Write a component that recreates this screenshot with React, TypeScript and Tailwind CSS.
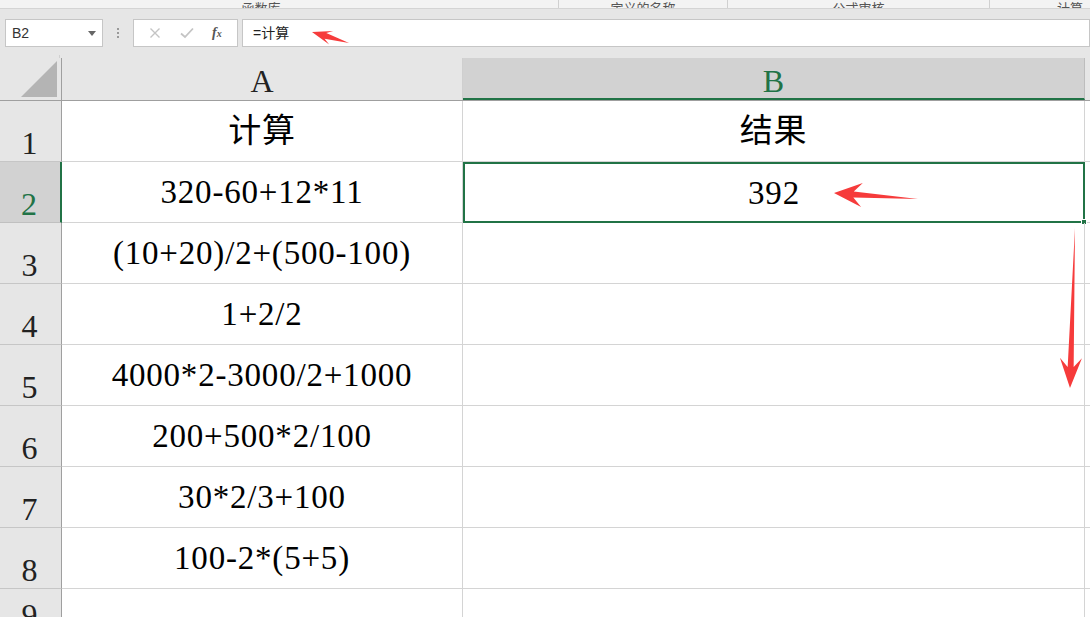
import React from "react";

const rows: { a: string; b: string }[] = [
  { a: "计算", b: "结果" },
  { a: "320-60+12*11", b: "392" },
  { a: "(10+20)/2+(500-100)", b: "" },
  { a: "1+2/2", b: "" },
  { a: "4000*2-3000/2+1000", b: "" },
  { a: "200+500*2/100", b: "" },
  { a: "30*2/3+100", b: "" },
  { a: "100-2*(5+5)", b: "" },
  { a: "", b: "" },
];

const serif = "font-['Liberation_Serif','Noto_Sans_CJK_SC',serif]";

function Arrow({ x1, y1, x2, y2, head = 26, width = 22 }: { x1: number; y1: number; x2: number; y2: number; head?: number; width?: number }) {
  // tapered arrow from tail (x1,y1) to tip (x2,y2)
  const dx = x2 - x1;
  const dy = y2 - y1;
  const len = Math.hypot(dx, dy);
  const ux = dx / len;
  const uy = dy / len;
  const px = -uy;
  const py = ux;
  const bx = x2 - ux * head;
  const by = y2 - uy * head;
  const nx = x2 - ux * (head * 0.7);
  const ny = y2 - uy * (head * 0.7);
  const pts = [
    [x1, y1],
    [nx + px * 3, ny + py * 3],
    [bx + px * (width / 2), by + py * (width / 2)],
    [x2, y2],
    [bx - px * (width / 2), by - py * (width / 2)],
    [nx - px * 3, ny - py * 3],
  ]
    .map((p) => p.join(","))
    .join(" ");
  return <polygon points={pts} fill="#f63b3b" />;
}

export default function App() {
  return (
    <div className="relative w-[1090px] h-[617px] overflow-hidden bg-white font-['Liberation_Sans','Noto_Sans_CJK_SC',sans-serif]">
      {/* ribbon group labels, cut off at the top of the shot */}
      <div className="flex h-[9px] overflow-hidden bg-[#f3f3f3] border-b border-[#d4d4d4] text-[13px] text-[#555] leading-none">
        <div className="w-[559px] border-r border-[#d0d0d0] flex items-end justify-center pr-[36px]">
          <span className="mb-[-7px]">函数库</span>
        </div>
        <div className="w-[169px] border-r border-[#d0d0d0] flex items-end justify-center">
          <span className="mb-[-7px]">定义的名称</span>
        </div>
        <div className="w-[262px] border-r border-[#d0d0d0] flex items-end justify-center">
          <span className="mb-[-7px]">公式审核</span>
        </div>
        <div className="flex-1 flex items-end justify-center pl-[60px]">
          <span className="mb-[-7px]">计算</span>
        </div>
      </div>

      {/* formula bar */}
      <div className="flex items-center h-[46px] bg-[#e6e6e6] pt-[2px]">
        <div className="ml-[5px] w-[98px] h-[28px] bg-white border border-[#c6c6c6] flex items-center justify-between px-[6px] text-[14px] text-[#333]">
          <span>B2</span>
          <span className="w-0 h-0 border-l-[4px] border-r-[4px] border-t-[5px] border-l-transparent border-r-transparent border-t-[#666]" />
        </div>
        <div className="w-[30px] flex flex-col items-center justify-center gap-[2px]">
          <span className="w-[2px] h-[2px] bg-[#999]" />
          <span className="w-[2px] h-[2px] bg-[#999]" />
          <span className="w-[2px] h-[2px] bg-[#999]" />
        </div>
        <div className="w-[105px] h-[28px] bg-white border border-[#c6c6c6] flex items-center justify-around px-[6px]">
          <svg width="12" height="12" viewBox="0 0 12 12">
            <path d="M1.5 1.5 L10.5 10.5 M10.5 1.5 L1.5 10.5" stroke="#c4c4c4" strokeWidth="1.4" />
          </svg>
          <svg width="14" height="12" viewBox="0 0 14 12">
            <path d="M1 6.5 L5 10 L13 1.5" stroke="#c4c4c4" strokeWidth="1.8" fill="none" />
          </svg>
          <span className="text-[14px] italic font-['Liberation_Serif',serif] text-[#555] font-bold leading-none">
            f<span className="text-[10px]">x</span>
          </span>
        </div>
        <div className="ml-[4px] flex-1 h-[28px] bg-white border border-[#c6c6c6] flex items-center pl-[10px] text-[14px] text-[#222]">
          =计算
        </div>
      </div>

      {/* gap strip */}
      <div className="h-[3px] bg-[#e6e6e6] flex">
        <div className="w-[59px]" />
        <div className="w-[1px] bg-[#d0d0d0]" />
      </div>

      {/* column headers */}
      <div className={`flex h-[43px] bg-[#e6e6e6] border-b border-[#9f9f9f] ${serif}`}>
        <div className="w-[62px] border-r border-[#9f9f9f] flex items-end justify-end pr-[4px] pb-[3px]">
          <svg width="36" height="36" viewBox="0 0 36 36">
            <polygon points="36,0 36,36 0,36" fill="#b4b4b4" />
          </svg>
        </div>
        <div className="w-[401px] border-r border-[#cfcfcf] flex items-center justify-center text-[32px] text-[#222] pt-[4px]">A</div>
        <div className="w-[622px] bg-[#d2d2d2] border-r border-[#bdbdbd] border-b-2 border-b-[#217346] flex items-center justify-center text-[32px] text-[#217346] pt-[6px]">
          B
        </div>
        <div className="flex-1 bg-[#e6e6e6]" />
      </div>

      {/* rows */}
      {rows.map((r, i) => {
        const sel = i === 1;
        const last = i === rows.length - 1;
        return (
          <div key={i} className={`flex h-[61px] ${serif}`}>
            <div
              className={`w-[62px] shrink-0 flex justify-center pr-[2px] text-[32px] leading-none border-b ${
                last ? "items-start pt-[10px]" : "items-end pb-[2px]"
              } ${
                sel
                  ? "bg-[#d2d2d2] text-[#217346] border-r-2 border-r-[#217346] border-b-[#c0c0c0]"
                  : "bg-[#e6e6e6] text-[#222] border-r border-r-[#9f9f9f] border-b-[#c6c6c6]"
              }`}
            >
              {i + 1}
            </div>
            <div className="w-[401px] shrink-0 border-r border-b border-[#d4d4d4] flex items-center justify-center text-[33px] tracking-[0.8px] text-black pt-[2px]">
              {r.a}
            </div>
            <div
              className={`relative w-[622px] shrink-0 flex items-center justify-center text-[33px] tracking-[0.8px] text-black pt-[2px] ${
                sel ? "border-2 border-[#217346]" : "border-r border-b border-[#d4d4d4]"
              }`}
            >
              {r.b}
              {sel && <span className="absolute right-[-4px] bottom-[-4px] w-[6px] h-[6px] bg-[#217346] border border-white" />}
            </div>
            <div className="flex-1 border-b border-[#d4d4d4]" />
          </div>
        );
      })}

      {/* annotation arrows */}
      <svg className="absolute left-0 top-0 pointer-events-none" width="1090" height="617">
        <Arrow x1={349} y1={43} x2={312} y2={32} head={20} width={14} />
        <Arrow x1={918} y1={199} x2={834} y2={193} head={28} width={24} />
        <Arrow x1={1075} y1={228} x2={1070} y2={388} head={30} width={22} />
      </svg>
    </div>
  );
}
